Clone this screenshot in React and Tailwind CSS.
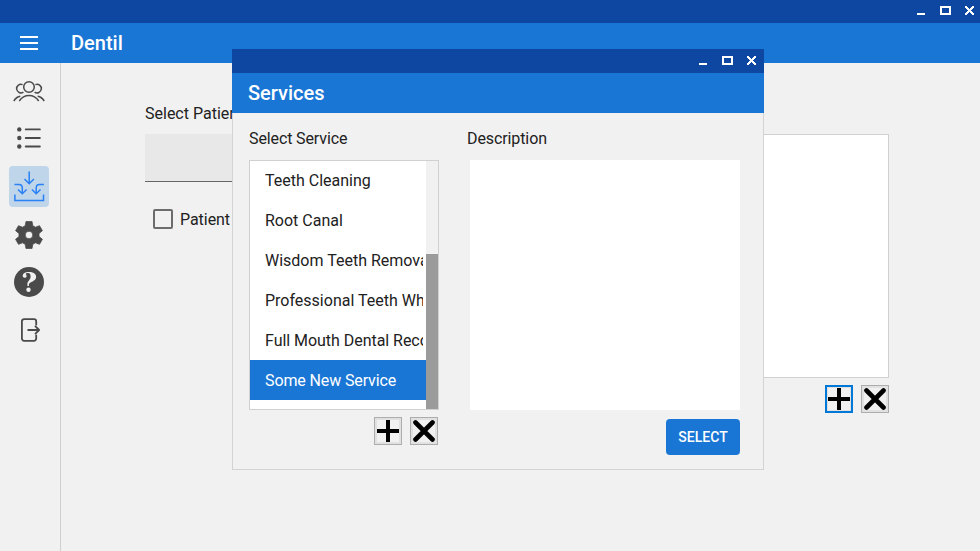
import React from "react";

const services = [
  { name: "Teeth Cleaning", tracking: "" },
  { name: "Root Canal", tracking: "" },
  { name: "Wisdom Teeth Removal", tracking: "" },
  { name: "Professional Teeth Whitening", tracking: "" },
  { name: "Full Mouth Dental Reconstruction", tracking: "tracking-[-0.04px]" },
  { name: "Some New Service", tracking: "tracking-[-0.12px]" },
];

function WindowControls() {
  return (
    <div className="flex items-end text-white">
      <div className="h-[2px] w-2 bg-white" />
      <div className="ml-[15px] h-[9px] w-[11px] border-2 border-white" />
      <svg className="ml-[14px] h-[9px] w-[9px]" viewBox="0 0 9 9" shapeRendering="crispEdges" fill="currentColor">
        <path d="M0 0h2v1h1v1h1v1h1V2h1V1h1V0h2v2H8v1H7v1H6v1h1v1h1v1h1v2H7V8H6V7H5V6H4v1H3v1H2v1H0V7h1V6h1V5h1V4H2V3H1V2H0z" />
      </svg>
    </div>
  );
}

function IconButton({ kind, focused }) {
  return (
    <button
      className={
        focused
          ? "flex h-7 w-7 items-center justify-center border-2 border-[#0078d7] bg-[#e1e1e1]"
          : "flex h-7 w-7 items-center justify-center border border-[#adadad] bg-[#e1e1e1]"
      }
    >
      <svg className="h-[22px] w-[22px] bg-[#f1f1f1]" viewBox="0 0 22 22" fill="none" stroke="#000" strokeWidth="4">
        {kind === "plus" ? (
          <path d="M11 0v22M0 11h22" />
        ) : (
          <path d="M2.5 2.5l17 17M19.5 2.5l-17 17" strokeWidth="4.6" strokeLinecap="round" />
        )}
      </svg>
    </button>
  );
}

function PeopleIcon() {
  return (
    <svg className="h-6 w-8" viewBox="0 0 32 24" fill="none" stroke="#4a4a4a" strokeWidth="1.5">
      <circle cx="16" cy="8" r="5.3" />
      <path d="M9.6 5.6A4.3 4.3 0 1 0 10.4 13.1M22.4 5.6A4.3 4.3 0 1 1 21.6 13.1" />
      <path d="M6.3 22C8.7 18.5 12 16.6 16 16.6s7.3 1.9 9.7 5.4M.8 22c1.5-2.4 3.5-4.2 6.5-4.7M31.2 22c-1.5-2.4-3.5-4.2-6.5-4.7" />
    </svg>
  );
}

function ListIcon() {
  return (
    <svg className="h-6 w-6" viewBox="0 0 24 24" fill="#4a4a4a">
      <circle cx="2.3" cy="3.4" r="2.2" />
      <circle cx="2.3" cy="12" r="2.2" />
      <circle cx="2.3" cy="20.5" r="2.2" />
      <path d="M8.7 3.4h14.2M8.7 12h14.2M8.7 20.5h14.2" stroke="#4a4a4a" strokeWidth="1.8" strokeLinecap="round" />
    </svg>
  );
}

function InboxIcon() {
  return (
    <svg className="h-8 w-8" viewBox="0 0 32 32" fill="none" stroke="#2a80f5" strokeWidth="1.5">
      <path d="M16.2 1.5v12M11.5 9l4.7 4.7L20.9 9" />
      <path d="M1.5 14.5H6c2.2 0 3.3 1.3 3.3 3.5v5.5M5 19.5l4.3 4.3 4.3-4.3" />
      <path d="M30.9 14.5h-4.4c-2.2 0-3.3 1.3-3.3 3.5v5.5M18.9 19.5l4.3 4.3 4.3-4.3" />
      <path d="M1.9 24.5v6h28.6v-6" />
    </svg>
  );
}

function GearIcon() {
  return (
    <svg className="h-7 w-7" viewBox="0 0 28 28" fill="#4a4a4a" stroke="#4a4a4a" strokeWidth="0.8" strokeLinejoin="round">
      <path
        fillRule="evenodd"
        d="M11 .4h6l.8 4.300 2.600 1.500 4.100-1.500 2.900 5-3.400 2.800v3l3.400 2.800-2.900 5-4.100-1.500-2.600 1.500-.8 4.300h-6l-.8-4.300-2.600-1.500-4.100 1.500-2.900-5L4 15.500v-3L.6 9.700l2.900-5 4.100 1.500 2.600-1.500zM14 10.200a3.800 3.800 0 1 0 0 7.600 3.800 3.800 0 0 0 0-7.600z"
      />
    </svg>
  );
}

function HelpIcon() {
  return (
    <svg className="h-[30px] w-[30px]" viewBox="0 0 30 30">
      <circle cx="15" cy="15" r="15" fill="#4a4a4a" />
      <path
        d="M13.4 19v-2.4c0-2 3.2-3.8 3.2-7 0-2.4-.8-3.5-2.6-3.5-1.2 0-2.2.4-2.2 1 0 .5.8.8.8 1.9 0 1.1-.8 1.8-1.9 1.8-1.2 0-2-.8-2-2C8.7 6.5 11.4 5 14.9 5c4.4 0 7.2 1.9 7.2 4.9 0 4.5-6.7 4.7-7.2 7.5V19z"
        fill="#f1f1f1"
      />
      <circle cx="14.5" cy="22.8" r="2.2" fill="#f1f1f1" />
    </svg>
  );
}

function ExitIcon() {
  return (
    <svg className="h-6 w-5" viewBox="0 0 20 24" fill="none" stroke="#4a4a4a" strokeWidth="1.8" strokeLinecap="round" strokeLinejoin="round">
      <path d="M16.2 6.7V3.3A2.2 2.2 0 0 0 14 1.1H4.1a2.2 2.2 0 0 0-2.2 2.2v17.3a2.2 2.2 0 0 0 2.2 2.2H14a2.2 2.2 0 0 0 2.200-2.200v-3.300" />
      <path d="M8.2 12H19M15.500 8.400 19.100 12l-3.600 3.600" />
    </svg>
  );
}

function Sidebar() {
  return (
    <nav className="flex w-[61px] shrink-0 flex-col items-center border-r border-[#d0d0d0] pr-[2px] pt-2">
      <div className="flex h-10 items-center justify-center"><PeopleIcon /></div>
      <div className="mt-[7px] flex h-10 items-center justify-center"><ListIcon /></div>
      <div className="mt-2 flex h-[41px] w-10 items-start justify-center rounded bg-[#bfd5ea] pt-1"><InboxIcon /></div>
      <div className="mt-2 flex h-10 items-center justify-center"><GearIcon /></div>
      <div className="mt-[7px] flex h-10 items-center justify-center"><HelpIcon /></div>
      <div className="mt-2 flex h-10 items-center justify-center pl-[2px]"><ExitIcon /></div>
    </nav>
  );
}

function ServicesWindow() {
  return (
    <section className="absolute left-[232px] top-[49px] flex h-[421px] w-[532px] flex-col bg-[#f1f1f1]">
      <div className="flex h-6 shrink-0 items-start justify-end bg-[#0d47a1] pr-2 pt-[7px]">
        <WindowControls />
      </div>
      <div className="flex h-10 shrink-0 items-center bg-[#1976d5] pl-4 text-[20px] font-medium text-white">Services</div>
      <div className="flex grow border-x border-b border-[#d3d3d3] pl-4">
        <div className="w-[190px]">
          <div className="flex h-[47px] items-center pt-1 tracking-[-0.12px]">Select Service</div>
          <div className="flex h-[250px] overflow-hidden border border-[#d0d0d0] bg-white">
            <ul className="-mt-px w-44 shrink-0">
              {services.map(({ name, tracking }, i) => (
                <li
                  key={name}
                  className={
                    i === services.length - 1
                      ? "h-10 bg-[#1976d5] pl-[15px] pr-[3px] pt-px leading-10 text-white"
                      : "h-10 pl-[15px] pr-[3px] pt-px leading-10"
                  }
                >
                  <div className={"h-[39px] overflow-hidden whitespace-nowrap " + tracking}>{name}</div>
                </li>
              ))}
            </ul>
            <div className="flex w-3 flex-col justify-end bg-[#f1f1f1]">
              <div className="h-[155px] bg-[#9b9b9b]" />
            </div>
          </div>
          <div className="flex justify-end gap-2 pr-px pt-[7px]">
            <IconButton kind="plus" />
            <IconButton kind="x" />
          </div>
        </div>
        <div className="ml-7 w-[273px]">
          <div className="flex h-[47px] items-center pt-1 tracking-[-0.1px]">Description</div>
          <div className="ml-[3px] h-[250px] bg-white" />
          <div className="flex justify-end pt-[9px]">
            <button className="h-9 w-[74px] rounded bg-[#1976d5] text-[14px] font-medium text-white">SELECT</button>
          </div>
        </div>
      </div>
    </section>
  );
}

export default function App() {
  return (
    <div className="relative flex h-[551px] w-[980px] flex-col overflow-hidden bg-[#f1f1f1] font-[Roboto,sans-serif] text-[16px] text-[#212121]">
      <div className="flex h-[23px] shrink-0 items-start justify-end bg-[#0d47a1] pr-[6px] pt-[6px]">
        <WindowControls />
      </div>
      <header className="flex h-10 shrink-0 items-center bg-[#1976d5] pl-5 text-white">
        <div className="flex w-[18px] flex-col gap-1">
          <div className="h-[2px] bg-white" />
          <div className="h-[2px] bg-white" />
          <div className="h-[2px] bg-white" />
        </div>
        <h1 className="ml-[33px] text-[20px] font-medium">Dentil</h1>
      </header>
      <div className="flex grow">
        <Sidebar />
        <main className="flex grow pl-[84px]">
          <div className="w-[250px]">
            <div className="pt-[39px] leading-6">Select Patient</div>
            <div className="mt-2 h-12 border-b border-[#666666] bg-[#e8e8e8]" />
            <label className="mt-[27px] flex h-5 items-start gap-[7px] pl-2 leading-[22px]">
              <span className="h-5 w-5 rounded-[2px] border-2 border-[#6c6c6c]" />
              <span className="tracking-[-0.05px]">Patient</span>
            </label>
          </div>
          <div className="ml-[224px] w-[270px] pt-[71px]">
            <div className="h-[244px] border border-[#d0d0d0] bg-white" />
            <div className="flex justify-end gap-2 pt-[7px]">
              <IconButton kind="plus" focused />
              <IconButton kind="x" />
            </div>
          </div>
        </main>
      </div>
      <ServicesWindow />
    </div>
  );
}
